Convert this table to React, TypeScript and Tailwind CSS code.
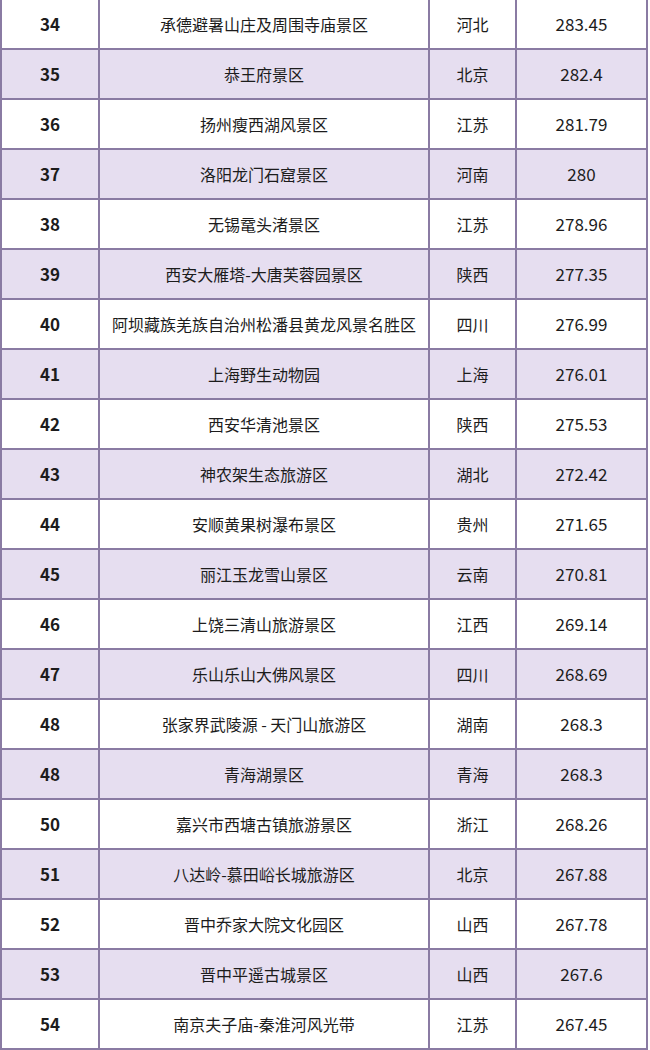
import React from 'react';

type Row = { rank: string; name: string; province: string; score: string };

const rows: Row[] = [
    { rank: '34', name: '承德避暑山庄及周围寺庙景区', province: '河北', score: '283.45' },
    { rank: '35', name: '恭王府景区', province: '北京', score: '282.4' },
    { rank: '36', name: '扬州瘦西湖风景区', province: '江苏', score: '281.79' },
    { rank: '37', name: '洛阳龙门石窟景区', province: '河南', score: '280' },
    { rank: '38', name: '无锡鼋头渚景区', province: '江苏', score: '278.96' },
    { rank: '39', name: '西安大雁塔-大唐芙蓉园景区', province: '陕西', score: '277.35' },
    { rank: '40', name: '阿坝藏族羌族自治州松潘县黄龙风景名胜区', province: '四川', score: '276.99' },
    { rank: '41', name: '上海野生动物园', province: '上海', score: '276.01' },
    { rank: '42', name: '西安华清池景区', province: '陕西', score: '275.53' },
    { rank: '43', name: '神农架生态旅游区', province: '湖北', score: '272.42' },
    { rank: '44', name: '安顺黄果树瀑布景区', province: '贵州', score: '271.65' },
    { rank: '45', name: '丽江玉龙雪山景区', province: '云南', score: '270.81' },
    { rank: '46', name: '上饶三清山旅游景区', province: '江西', score: '269.14' },
    { rank: '47', name: '乐山乐山大佛风景区', province: '四川', score: '268.69' },
    { rank: '48', name: '张家界武陵源 - 天门山旅游区', province: '湖南', score: '268.3' },
    { rank: '48', name: '青海湖景区', province: '青海', score: '268.3' },
    { rank: '50', name: '嘉兴市西塘古镇旅游景区', province: '浙江', score: '268.26' },
    { rank: '51', name: '八达岭-慕田峪长城旅游区', province: '北京', score: '267.88' },
    { rank: '52', name: '晋中乔家大院文化园区', province: '山西', score: '267.78' },
    { rank: '53', name: '晋中平遥古城景区', province: '山西', score: '267.6' },
    { rank: '54', name: '南京夫子庙-秦淮河风光带', province: '江苏', score: '267.45' },
];

export default function App() {
    return (
        <div
            className="w-[650px] h-[1050px] bg-white overflow-hidden text-[#1c1c1c]"
            style={{ fontFamily: '"Noto Sans CJK SC", "Noto Sans", sans-serif' }}
        >
            <div className="w-[648px] border-l-2 border-[#8a7ba3]">
                {rows.map((r, i) => {
                    const shaded = i % 2 === 1;
                    return (
                        <div
                            key={i}
                            className={`grid grid-cols-[98px_330px_87px_131px] h-[50px] ${shaded ? 'bg-[#e6def0]' : 'bg-white'}`}
                        >
                            <div className="flex items-center justify-center border-r-2 border-b-2 border-[#8a7ba3] text-[17px] font-bold">
                                {r.rank}
                            </div>
                            <div className="flex items-center justify-center border-r-2 border-b-2 border-[#8a7ba3] text-[16px] whitespace-nowrap">
                                {r.name}
                            </div>
                            <div className="flex items-center justify-center border-r-2 border-b-2 border-[#8a7ba3] text-[16px]">
                                {r.province}
                            </div>
                            <div className="flex items-center justify-center border-r-2 border-b-2 border-[#8a7ba3] text-[17px]">
                                {r.score}
                            </div>
                        </div>
                    );
                })}
            </div>
        </div>
    );
}
